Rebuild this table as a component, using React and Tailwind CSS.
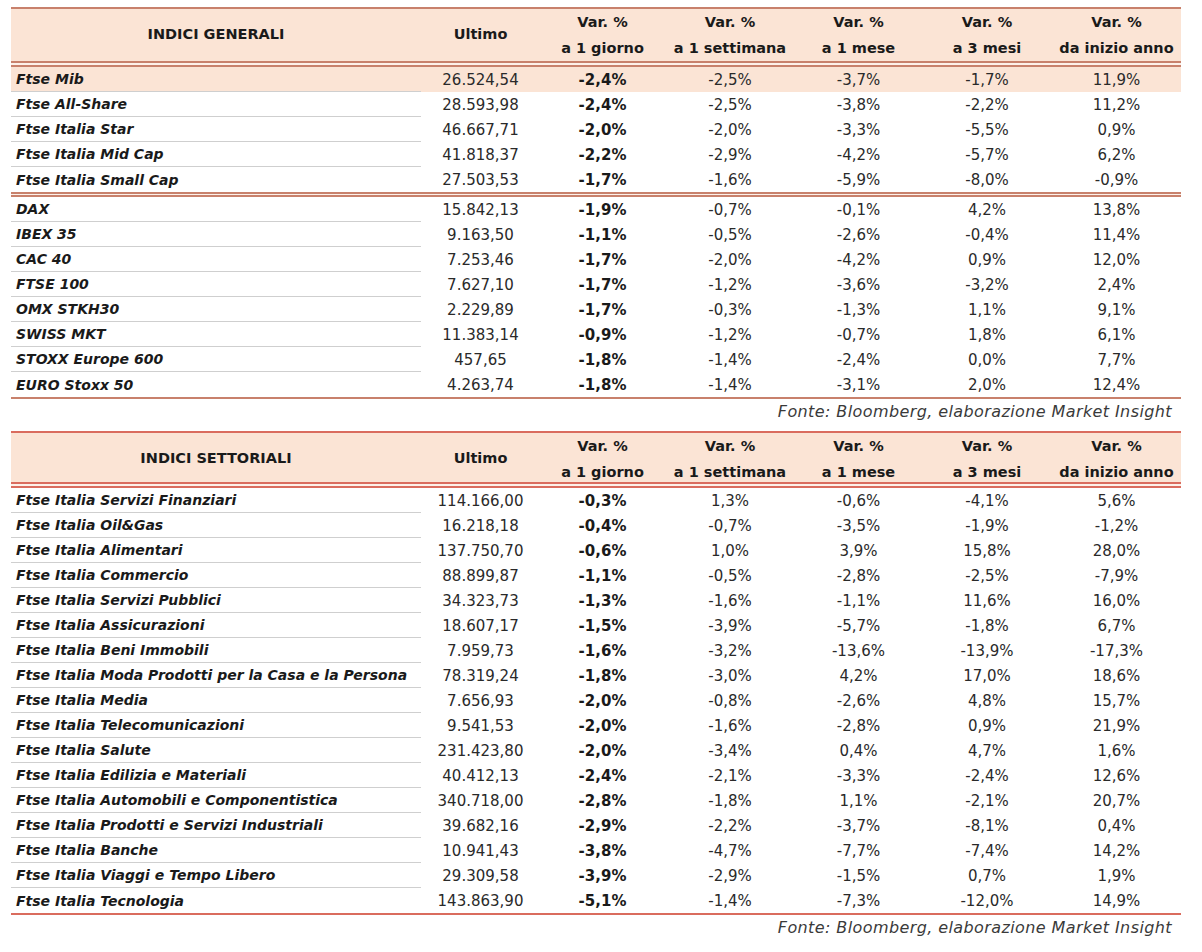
const COLS = "grid grid-cols-[410px_119px_125px_130px_127px_130px_129px]";

const generali = [
  [
    ["Ftse Mib", "26.524,54", "-2,4%", "-2,5%", "-3,7%", "-1,7%", "11,9%", true],
    ["Ftse All-Share", "28.593,98", "-2,4%", "-2,5%", "-3,8%", "-2,2%", "11,2%"],
    ["Ftse Italia Star", "46.667,71", "-2,0%", "-2,0%", "-3,3%", "-5,5%", "0,9%"],
    ["Ftse Italia Mid Cap", "41.818,37", "-2,2%", "-2,9%", "-4,2%", "-5,7%", "6,2%"],
    ["Ftse Italia Small Cap", "27.503,53", "-1,7%", "-1,6%", "-5,9%", "-8,0%", "-0,9%"],
  ],
  [
    ["DAX", "15.842,13", "-1,9%", "-0,7%", "-0,1%", "4,2%", "13,8%"],
    ["IBEX 35", "9.163,50", "-1,1%", "-0,5%", "-2,6%", "-0,4%", "11,4%"],
    ["CAC 40", "7.253,46", "-1,7%", "-2,0%", "-4,2%", "0,9%", "12,0%"],
    ["FTSE 100", "7.627,10", "-1,7%", "-1,2%", "-3,6%", "-3,2%", "2,4%"],
    ["OMX STKH30", "2.229,89", "-1,7%", "-0,3%", "-1,3%", "1,1%", "9,1%"],
    ["SWISS MKT", "11.383,14", "-0,9%", "-1,2%", "-0,7%", "1,8%", "6,1%"],
    ["STOXX Europe 600", "457,65", "-1,8%", "-1,4%", "-2,4%", "0,0%", "7,7%"],
    ["EURO Stoxx 50", "4.263,74", "-1,8%", "-1,4%", "-3,1%", "2,0%", "12,4%"],
  ],
];

const settoriali = [
  [
    ["Ftse Italia Servizi Finanziari", "114.166,00", "-0,3%", "1,3%", "-0,6%", "-4,1%", "5,6%"],
    ["Ftse Italia Oil&Gas", "16.218,18", "-0,4%", "-0,7%", "-3,5%", "-1,9%", "-1,2%"],
    ["Ftse Italia Alimentari", "137.750,70", "-0,6%", "1,0%", "3,9%", "15,8%", "28,0%"],
    ["Ftse Italia Commercio", "88.899,87", "-1,1%", "-0,5%", "-2,8%", "-2,5%", "-7,9%"],
    ["Ftse Italia Servizi Pubblici", "34.323,73", "-1,3%", "-1,6%", "-1,1%", "11,6%", "16,0%"],
    ["Ftse Italia Assicurazioni", "18.607,17", "-1,5%", "-3,9%", "-5,7%", "-1,8%", "6,7%"],
    ["Ftse Italia Beni Immobili", "7.959,73", "-1,6%", "-3,2%", "-13,6%", "-13,9%", "-17,3%"],
    ["Ftse Italia Moda Prodotti per la Casa e la Persona", "78.319,24", "-1,8%", "-3,0%", "4,2%", "17,0%", "18,6%"],
    ["Ftse Italia Media", "7.656,93", "-2,0%", "-0,8%", "-2,6%", "4,8%", "15,7%"],
    ["Ftse Italia Telecomunicazioni", "9.541,53", "-2,0%", "-1,6%", "-2,8%", "0,9%", "21,9%"],
    ["Ftse Italia Salute", "231.423,80", "-2,0%", "-3,4%", "0,4%", "4,7%", "1,6%"],
    ["Ftse Italia Edilizia e Materiali", "40.412,13", "-2,4%", "-2,1%", "-3,3%", "-2,4%", "12,6%"],
    ["Ftse Italia Automobili e Componentistica", "340.718,00", "-2,8%", "-1,8%", "1,1%", "-2,1%", "20,7%"],
    ["Ftse Italia Prodotti e Servizi Industriali", "39.682,16", "-2,9%", "-2,2%", "-3,7%", "-8,1%", "0,4%"],
    ["Ftse Italia Banche", "10.941,43", "-3,8%", "-4,7%", "-7,7%", "-7,4%", "14,2%"],
    ["Ftse Italia Viaggi e Tempo Libero", "29.309,58", "-3,9%", "-2,9%", "-1,5%", "0,7%", "1,9%"],
    ["Ftse Italia Tecnologia", "143.863,90", "-5,1%", "-1,4%", "-7,3%", "-12,0%", "14,9%"],
  ],
];

const periods = ["a 1 giorno", "a 1 settimana", "a 1 mese", "a 3 mesi", "da inizio anno"];

function DoubleLine({ color, gap }) {
  return (
    <div>
      <div className={`h-[2px] ${color}`} />
      <div className={`${gap} bg-[#fdf1ea]`} />
      <div className={`h-[2px] ${color}`} />
    </div>
  );
}

function Row({ r, last }) {
  const [name, ultimo, g, s, m, t, a, hl] = r;
  const num = "text-center text-[15px] text-[#2a2a2a] pt-[1px]";
  return (
    <div className={`${COLS} h-[25px] items-center ${hl ? "bg-[#fbe4d5]" : ""}`}>
      <div
        className={`h-full flex items-center pl-[5px] pt-[1px] font-bold italic text-[14px] text-[#1a1a1a] whitespace-nowrap ${
          last ? "" : "border-b border-[#cfcfcf]"
        }`}
      >
        {name}
      </div>
      <div className={num}>{ultimo}</div>
      <div className="text-center text-[15px] font-bold text-[#1a1a1a] pt-[1px]">{g}</div>
      <div className={num}>{s}</div>
      <div className={num}>{m}</div>
      <div className={num}>{t}</div>
      <div className={num}>{a}</div>
    </div>
  );
}

function Table({ title, groups, line, headH }) {
  return (
    <div className="w-[1170px]">
      <div className={`h-[2px] ${line}`} />
      <div className={`${COLS} ${headH} bg-[#fbe4d5] items-center text-[14.5px] font-bold text-[#1a1a1a] whitespace-nowrap`}>
        <div className="text-center">{title}</div>
        <div className="text-center">Ultimo</div>
        {periods.map((p) => (
          <div key={p} className="text-center leading-[26px]">
            <div>Var. %</div>
            <div>{p}</div>
          </div>
        ))}
      </div>
      {groups.map((rows, gi) => (
        <div key={gi}>
          <DoubleLine color={line} gap={gi === 0 ? "h-[2px]" : "h-[1px]"} />
          {rows.map((r, i) => (
            <Row key={r[0]} r={r} last={i === rows.length - 1} />
          ))}
        </div>
      ))}
      <div className={`h-[2px] ${line}`} />
      <div className="h-[26px] flex items-center justify-end pr-[9px] italic text-[16px] tracking-[0.4px] text-[#3a3a3a]">
        Fonte: Bloomberg, elaborazione Market Insight
      </div>
    </div>
  );
}

export default function App() {
  return (
    <div
      className="w-[1202px] h-[952px] bg-white pt-[7px] pl-[11px]"
      style={{ fontFamily: '"DejaVu Sans", "Liberation Sans", sans-serif' }}
    >
      <Table title="INDICI GENERALI" groups={generali} line="bg-[#c8816c]" headH="h-[52px]" />
      <div className="h-[6px]" />
      <Table title="INDICI SETTORIALI" groups={settoriali} line="bg-[#da6c5e]" headH="h-[49px]" />
    </div>
  );
}
